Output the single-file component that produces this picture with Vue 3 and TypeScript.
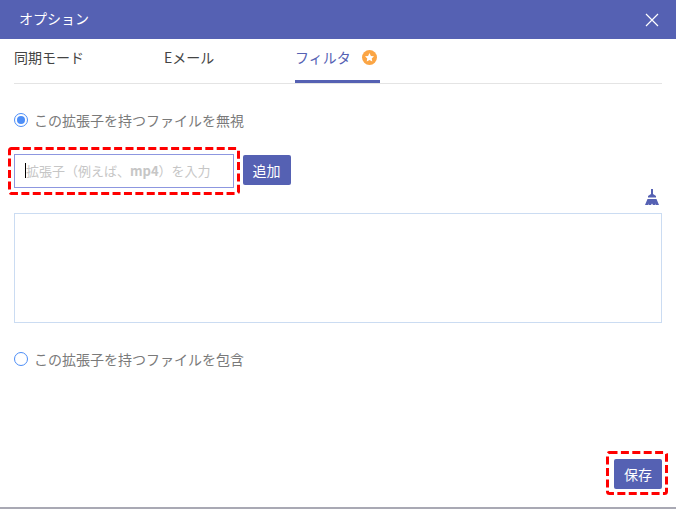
<script setup lang="ts">
const tabs = [
  { label: '同期モード', cls: 'tab-sync' },
  { label: 'Eメール', cls: 'tab-mail' },
]
</script>

<template>
  <div class="dialog">
    <header class="head">
      <span class="title">オプション</span>
      <svg class="close" width="14" height="14" viewBox="0 0 14 14" aria-hidden="true">
        <path d="M1 1L13 13M13 1L1 13" stroke="#fff" stroke-width="1.2" fill="none" />
      </svg>
    </header>
    <main class="body">
      <nav class="tabs">
        <span v-for="t in tabs" :key="t.label" class="tab" :class="t.cls">{{ t.label }}</span>
        <span class="tab tab-filter">
          フィルタ
          <svg class="star" width="15" height="15" viewBox="0 0 14 14" aria-hidden="true">
            <circle cx="7" cy="7" r="7" fill="#fba544" />
            <path d="M7 2.8l1.3 2.7 2.9.4-2.1 2 .5 2.9L7 9.4l-2.6 1.4.5-2.9-2.1-2 2.9-.4z" fill="#fff" />
          </svg>
        </span>
      </nav>

      <label class="radio-row first">
        <span class="radio on"></span>
        <span>この拡張子を持つファイルを無視</span>
      </label>

      <div class="add-row">
        <div class="dash input-dash">
          <svg class="dash-line" width="232" height="48" aria-hidden="true">
            <rect x="1.5" y="1.5" width="229" height="45" rx="2" class="dash-rect" />
          </svg>
          <div class="input"><i class="caret"></i><span class="ph">拡張子（例えば、<b>mp4</b>）を入力</span></div>
        </div>
        <button class="btn add">追加</button>
      </div>

      <div class="tool-row">
        <svg width="14" height="16" viewBox="0 0 14 16" aria-hidden="true">
          <path d="M6 0h2v5l3 2v1.500H3V7l3-2zM2.500 10h9L14 16H10.500l-.3-1.500-.3 1.500H8v-1.500l-1 1.500-1-1.500V16H4.100l-.3-1.500-.3 1.500H0z" fill="#5561b3" />
        </svg>
      </div>
      <div class="list"></div>

      <label class="radio-row second">
        <span class="radio"></span>
        <span>この拡張子を持つファイルを包含</span>
      </label>

      <div class="foot">
        <div class="dash save-dash">
          <svg class="dash-line" width="62" height="44" aria-hidden="true">
            <rect x="1.5" y="1.5" width="59" height="41" rx="2" class="dash-rect" />
          </svg>
          <button class="btn save">保存</button>
        </div>
      </div>
    </main>
  </div>
</template>

<style>
html, body { margin: 0; background: #fff; }
</style>

<style scoped>
.dialog {
  width: 676px;
  height: 509px;
  display: flex;
  flex-direction: column;
  box-sizing: border-box;
  border-bottom: 2px solid #a9a9b4;
  background: #fff;
  font-family: "Noto Sans CJK JP", "Noto Sans", sans-serif;
  font-size: 14px;
  overflow: hidden;
}
.head {
  height: 39px;
  flex: none;
  box-sizing: border-box;
  background: #5561b3;
  color: #fff;
  display: flex;
  align-items: center;
  justify-content: space-between;
  padding: 0 17px 3px 19px;
}
.close { margin-top: 3px; }
.title { font-size: 14px; }
.body {
  flex: 1;
  display: flex;
  flex-direction: column;
  padding: 0 14px;
  position: relative;
}
.tabs {
  display: flex;
  height: 45px;
  flex: none;
  box-sizing: border-box;
  border-bottom: 1px solid #e4e4e4;
}
.tab {
  box-sizing: border-box;
  height: 44px;
  line-height: 36px;
  color: #444;
  white-space: nowrap;
}
.tab-sync { width: 150px; }
.tab-mail { width: 131px; }
.tab-filter {
  width: 85px;
  color: #5561b3;
  border-bottom: 3px solid #5561b3;
  display: flex;
  align-items: center;
  padding: 0 0 5px 0;
  gap: 11px;
  line-height: 1;
}
.radio-row {
  display: flex;
  align-items: center;
  gap: 6px;
  color: #7a7a7a;
  height: 20px;
  line-height: 20px;
}
.first { margin-top: 26px; }
.second { margin-top: 26px; }
.radio {
  width: 14px;
  height: 14px;
  box-sizing: border-box;
  border: 1px solid #4d8ef7;
  border-radius: 50%;
  background: #fff;
  flex: none;
  position: relative;
}
.radio.on::after {
  content: "";
  position: absolute;
  inset: 2px;
  border-radius: 50%;
  background: #4d8ef7;
}
.add-row {
  margin-top: 17px;
  margin-left: -6px;
  display: flex;
  align-items: flex-start;
  gap: 2.500px;
}
.dash {
  position: relative;
  box-sizing: border-box;
  flex: none;
}
.dash-line {
  position: absolute;
  left: 0;
  top: 0;
  pointer-events: none;
}
.dash-rect {
  fill: none;
  stroke: #ff0000;
  stroke-width: 3;
  stroke-dasharray: 8 3.4;
}
.input-dash {
  width: 232px;
  height: 48px;
  padding: 7px 0 0 6px;
}
.input {
  height: 34px;
  width: 220px;
  box-sizing: border-box;
  border: 1px solid #8d97e0;
  display: flex;
  align-items: center;
  padding: 0 0 2px 11px;
  position: relative;
  font-size: 13px;
}
.caret {
  position: absolute;
  left: 10px;
  top: 8px;
  width: 1px;
  height: 15px;
  background: #000;
}
.ph { color: #c6c6c6; white-space: nowrap; }
.ph b { font-weight: 700; }
.btn {
  border: none;
  border-radius: 2px;
  background: #5561b3;
  color: #fff;
  font: inherit;
  padding: 0;
}
.add { width: 48px; height: 30px; margin-top: 8px; }
.tool-row {
  display: flex;
  justify-content: flex-end;
  height: 24px;
  margin-top: -6px;
  padding-right: 3px;
}
.list {
  height: 110px;
  flex: none;
  box-sizing: border-box;
  border: 1px solid #cbdcf2;
}
.foot {
  margin-top: auto;
  margin-right: -6px;
  display: flex;
  justify-content: flex-end;
  padding-bottom: 12px;
}
.save-dash {
  width: 62px;
  height: 44px;
  padding: 8px 0 0 8px;
}
.save { width: 48px; height: 30px; display: block; }
</style>
